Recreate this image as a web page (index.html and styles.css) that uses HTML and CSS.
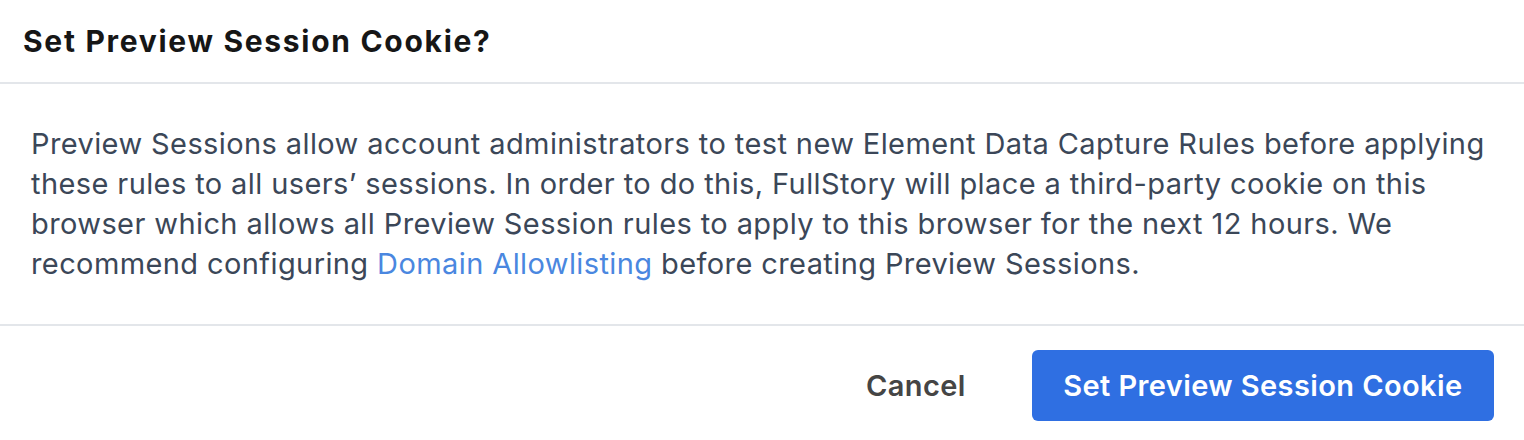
FILE: index.html
```html
<!DOCTYPE html>
<html lang="en">
<head>
    <meta charset="UTF-8">
    <meta name="viewport" content="width=device-width, initial-scale=1.0">
    <title>Set Preview Session Cookie?</title>
    <link rel="stylesheet" href="styles.css">
</head>
<body>
<div class="dialog">
    <div class="dialog-header">
        <h1>Set Preview Session Cookie?</h1>
    </div>
    <div class="dialog-body">
        <p>Preview Sessions allow account administrators to test new Element Data Capture Rules before applying<br>
        these rules to all users’ sessions. In order to do this, FullStory will place a third-party cookie on this<br>
        browser which allows all Preview Session rules to apply to this browser for the next 12 hours. We<br>
        recommend configuring <a href="#">Domain Allowlisting</a> before creating Preview Sessions.</p>
    </div>
    <div class="dialog-footer">
        <button class="btn-cancel">Cancel</button>
        <button class="btn-primary">Set Preview Session Cookie</button>
    </div>
</div>
</body>
</html>
```

FILE: styles.css
```css
body{
    margin: 0;
    background: #fff;
    font-family: Inter, Roboto, sans-serif;
}
.dialog{
    width: 1524px;
}
.dialog-header{
    height: 82px;
    display: flex;
    align-items: center;
    padding: 0 23px;
    border-bottom: 2px solid #e3e6ea;
}
h1{
    margin: 0;
    font-size: 30px;
    font-weight: 700;
    letter-spacing: 1.7px;
    color: #161616;
}
.dialog-body{
    padding: 40px 30px 40px 31px;
    border-bottom: 2px solid #e3e6ea;
}
.dialog-body p{
    margin: 0;
    font-size: 29px;
    letter-spacing: 0.4px;
    line-height: 40px;
    color: #3b4758;
    white-space: nowrap;
}
.dialog-body a{
    color: #4a87e0;
    text-decoration: none;
}
.dialog-footer{
    display: flex;
    justify-content: flex-end;
    align-items: center;
    gap: 34px;
    padding: 24px 30px;
}
button{
    font-family: inherit;
    font-size: 29px;
    font-weight: 600;
    letter-spacing: 0.4px;
    border: none;
    cursor: pointer;
}
.btn-cancel{
    background: none;
    color: #454545;
    padding: 0 32px;
}
.btn-primary{
    height: 71px;
    padding: 0 31.5px;
    border-radius: 6px;
    background-color: #2f6fe2;
    color: #fff;
}
```
